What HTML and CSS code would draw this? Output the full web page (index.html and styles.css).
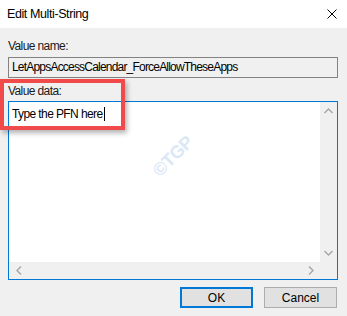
FILE: index.html
```html
<!DOCTYPE html>
<html lang="en">

<head>
    <meta charset="UTF-8">
    <title>Edit Multi-String</title>
    <link rel="stylesheet" href="styles.css">
</head>

<body>
    <div class="dialog">
        <div class="title-bar">
            <span class="title">Edit Multi-String</span>
            <svg class="close" width="10" height="10" viewBox="0 0 10 10">
                <path d="M0.5 0.5 L9.5 9.5 M9.5 0.5 L0.5 9.5" stroke="#000" stroke-width="1" fill="none" />
            </svg>
        </div>

        <div class="dialog-body">
            <div class="label">Value name:</div>
            <div class="name-field">LetAppsAccessCalendar_ForceAllowTheseApps</div>

            <div class="label label-data">Value data:</div>
            <div class="data-box">
                <div class="data-text">Type the PFN here<span class="caret"></span></div>
                <div class="vscroll">
                    <svg width="9" height="6" viewBox="0 0 9 6"><path d="M0.5 5 L4.5 1 L8.5 5" stroke="#a6a6a6" stroke-width="1.4" fill="none" /></svg>
                    <svg width="9" height="6" viewBox="0 0 9 6"><path d="M0.5 1 L4.5 5 L8.5 1" stroke="#a6a6a6" stroke-width="1.4" fill="none" /></svg>
                </div>
                <div class="hscroll">
                    <svg width="6" height="9" viewBox="0 0 6 9"><path d="M5 0.5 L1 4.5 L5 8.5" stroke="#a6a6a6" stroke-width="1.4" fill="none" /></svg>
                    <svg width="6" height="9" viewBox="0 0 6 9"><path d="M1 0.5 L5 4.5 L1 8.5" stroke="#a6a6a6" stroke-width="1.4" fill="none" /></svg>
                </div>
                <div class="corner"></div>
            </div>

            <div class="buttons">
                <button class="btn btn-default">OK</button>
                <button class="btn">Cancel</button>
            </div>
        </div>

        <!-- red highlight box drawn over the dialog -->
        <div class="highlight"></div>
        <div class="watermark">&copy;TGP</div>
    </div>
</body>

</html>
```

FILE: styles.css
```css
* {
    box-sizing: border-box;
}

body {
    margin: 0;
    font-family: "Liberation Sans", Arial, sans-serif;
    font-size: 12px;
    color: #000;
}

.dialog {
    position: relative;
    width: 347px;
    height: 316px;
    background: #f0f0f0;
    overflow: hidden;
}

.title-bar {
    height: 28px;
    background: #ffffff;
    display: flex;
    align-items: center;
    justify-content: space-between;
    padding: 0 10px 0 7px;
}

.title {
    font-size: 12.5px;
    letter-spacing: -0.4px;
    margin-top: -1px;
}

.close {
    display: block;
    margin-top: -1px;
}

.dialog-body {
    padding: 10px 9px 0 8px;
}

.label {
    line-height: 16px;
    height: 16px;
    color: #1a1a1a;
    letter-spacing: -0.6px;
}

.name-field {
    margin-top: 3px;
    height: 21px;
    border: 1px solid #838383;
    background: #f0f0f0;
    padding: 0 4px 0 3px;
    line-height: 19px;
    white-space: nowrap;
    letter-spacing: -0.8px;
}

.label-data {
    margin-top: 5px;
}

.data-box {
    margin-top: 2px;
    height: 179px;
    border: 1px solid #0078d7;
    background: #ffffff;
    display: grid;
    grid-template-columns: 1fr 17px;
    grid-template-rows: 1fr 17px;
}

.data-text {
    padding: 4px 0 0 3px;
    line-height: 16px;
    letter-spacing: -0.6px;
}

.caret {
    display: inline-block;
    width: 1px;
    height: 14px;
    margin-left: 1px;
    background: #000;
    vertical-align: -3px;
}

.vscroll {
    background: #f0f0f0;
    display: flex;
    flex-direction: column;
    justify-content: space-between;
    align-items: center;
    padding: 6px 0 6px 0;
}

.hscroll {
    background: #f0f0f0;
    display: flex;
    justify-content: space-between;
    align-items: center;
    padding: 0 6px 0 7px;
}

.corner {
    background: #f0f0f0;
}

.buttons {
    display: flex;
    justify-content: flex-end;
    gap: 11px;
    margin-top: 7px;
    padding-right: 1px;
}

.btn {
    width: 73px;
    height: 21px;
    font-family: inherit;
    font-size: 12px;
    color: #000;
    background: #e1e1e1;
    border: 1px solid #adadad;
    padding: 0;
}

.btn-default {
    border: 2px solid #0078d7;
}

.highlight {
    position: absolute;
    left: 0;
    top: 79px;
    width: 125px;
    height: 51px;
    border: 4px solid #f04a4a;
    box-shadow: 2px 3px 5px rgba(0, 0, 0, 0.3);
}

.watermark {
    position: absolute;
    left: 149px;
    top: 146px;
    font-size: 18px;
    font-weight: bold;
    color: #dae8f6;
    transform: rotate(-45deg);
    letter-spacing: -0.5px;
}
```
